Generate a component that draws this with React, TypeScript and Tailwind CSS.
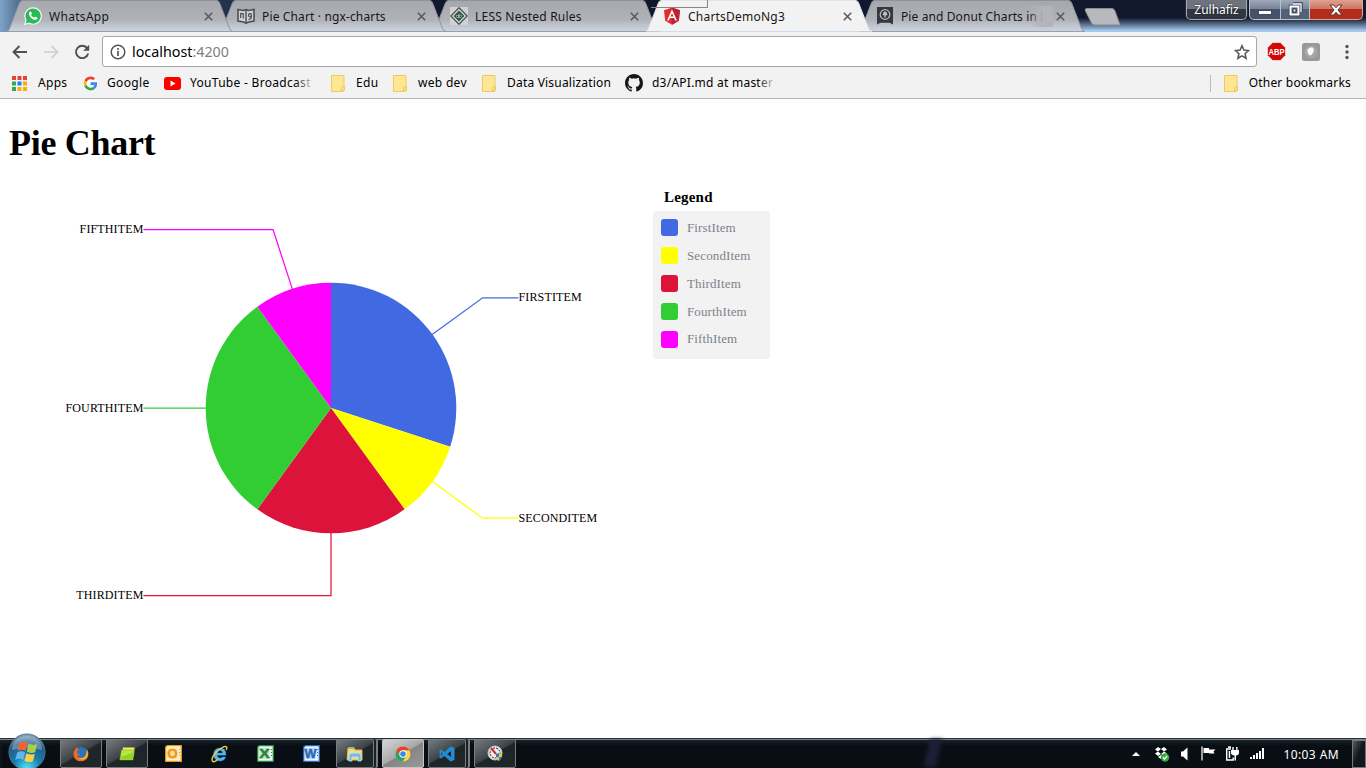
import React from "react";

const UI = "font-['Noto_Sans','Open_Sans',sans-serif]";

function WhatsApp() {
  return (
    <svg width="18" height="18" viewBox="0 0 18 18">
      <path d="M9 .8a8.2 8.2 0 0 0-7 12.3L.8 17.3 5 16.1A8.2 8.2 0 1 0 9 .8z" fill="#29b95b" stroke="#f3f6f4" strokeWidth="1.2" />
      <path d="M5.500 5c.6-.8 1.400-.8 1.700-.1l.6 1.400c.2.500-.2.900-.7 1.400.7 1.400 1.700 2.300 3.100 2.900.6-.7 1-1.100 1.500-.8l1.400.7c.6.400.3 1.400-.4 1.900-1.300 1-3.400.3-5-1C5.800 9.800 4.100 7 5.500 5z" fill="#fff" />
    </svg>
  );
}
function Book() {
  return (
    <svg width="18" height="16" viewBox="0 0 18 16">
      <path d="M1 1.500l5.500 1L9 1.500l2.500 1 5.500-1v11.500l-5.500 1L9 15.200l-2.500-1.200-5.500-1z" fill="#d0d2d6" stroke="#4b4e52" strokeWidth="1.600" />
      <path d="M9 2v12.500" stroke="#4b4e52" strokeWidth="1.400" />
      <path d="M3.700 10V5M6.300 10.500V5.500M3.500 5.300l3 .5" fill="none" stroke="#4b4e52" strokeWidth="1.200" />
      <path d="M14.300 6.500c-.5-1.700-2.800-1-2.800.8s2.300 2 2.800.3zM14.300 5.500v3.500q0 2-2.800 2.500" fill="none" stroke="#4b4e52" strokeWidth="1.200" />
    </svg>
  );
}
function Less() {
  return (
    <svg width="18" height="18" viewBox="0 0 18 18">
      <rect width="18" height="18" fill="#cfd1d4" />
      <path d="M9 .8L17.200 9 9 17.200.8 9z" fill="#d9dcdb" stroke="#46514d" strokeWidth="1.300" />
      <path d="M9 3.500L14.500 9 9 14.500 3.500 9z" fill="#3a5147" />
      <path d="M5.500 8l2 .5L9 6.500l1.500 2 2-.5L11 11H7z" fill="#81b598" />
      <path d="M7 9.500h1M10 9.500h1" stroke="#21352c" />
    </svg>
  );
}
function Angular() {
  return (
    <svg width="18" height="18" viewBox="0 0 18 18">
      <path d="M9 .5l8 2.800-1.200 10.500L9 17.700l-6.800-3.900L1 3.300z" fill="#df2e31" />
      <path d="M9 .5l8 2.800-1.200 10.500L9 17.700z" fill="#bd2430" />
      <path fillRule="evenodd" d="M9 2.400L4 13.500h1.900l1-2.500h4.200l1 2.500H14zM9 6.200l1.400 3.300H7.600z" fill="#fff" />
    </svg>
  );
}
function Ribbon() {
  return (
    <svg width="16" height="18" viewBox="0 0 16 18">
      <path d="M0 0h16v17.500l-3.500-1.800H3.500L0 17.500z" fill="#35383f" />
      <circle cx="8" cy="7.500" r="4.800" fill="none" stroke="#b6b8bd" strokeWidth="1.300" />
      <path d="M8 4.500v6M5.700 7.500h4.600M6 5.800h4" stroke="#c7c9cd" strokeWidth="1.300" />
    </svg>
  );
}

type Tab = { title: string; icon: React.ReactNode; stack: string; active?: boolean; fade?: boolean; gap: string };
const tabs: Tab[] = [
  { title: "WhatsApp", icon: <WhatsApp />, stack: "z-[5] tracking-[.3px]", gap: "gap-[7px]" },
  { title: "Pie Chart · ngx-charts", icon: <Book />, stack: "z-[4] tracking-[.14px]", gap: "gap-[7px]" },
  { title: "LESS Nested Rules", icon: <Less />, stack: "z-[3] tracking-[.22px]", gap: "gap-[7px]" },
  { title: "ChartsDemoNg3", icon: <Angular />, stack: "z-[6] tracking-[.22px]", active: true, gap: "gap-[7px]" },
  { title: "Pie and Donut Charts in D", icon: <Ribbon />, stack: "z-[2] tracking-[.1px]", fade: true, gap: "gap-[7px]" },
];

function TabView({ tab }: { tab: Tab }) {
  return (
    <div className={`relative -mr-[13px] h-8 w-[226px] shrink-0 ${tab.stack}`}>
      <svg className="absolute inset-0" width="226" height="32">
        <defs>
          <linearGradient id="idle" x2="0" y2="1">
            <stop offset="0" stopColor="#a6a8ae" />
            <stop offset=".62" stopColor="#b0b2b8" />
            <stop offset=".85" stopColor="#c3c9d4" />
            <stop offset="1" stopColor="#ccd3df" />
          </linearGradient>
        </defs>
        <path
          d="M0 31.500Q1.500 31 2.500 28.500L12 4Q13 1 15 1H210Q212 1 213 4L222.500 28.500Q223.500 31 226 31.500z"
          fill={tab.active ? "#f2f2f2" : "url(#idle)"}
        />
        <path
          d="M0 31.500Q1.500 31 2.500 28.500L12 4Q13 .5 15 .5H210Q212 .5 213 4L222.500 28.500Q223.500 31 226 31.500"
          fill="none"
          stroke={tab.active ? "#e2e4e8" : "#8d929b"}
        />
        {!tab.active && <path d="M0 31.500H226" stroke="#9a9fa8" />}
      </svg>
      <div className={`relative flex h-8 items-center pl-[17px] pr-[20px] ${tab.gap}`}>
        <span className="flex w-[18px] shrink-0 justify-center">{tab.icon}</span>
        <span className="relative flex-1 whitespace-nowrap pt-px text-[12px] leading-5 text-[#171717]">
          {tab.title}
          {tab.fade && <span className="absolute inset-y-0 -right-1 w-6 bg-linear-to-r from-transparent to-[#b2b4ba] to-60%" />}
        </span>
        <svg width="9" height="9" viewBox="0 0 9 9" className="shrink-0">
          <path d="M.8.8l7.400 7.400M8.200.8L.8 8.200" stroke="#55575b" strokeWidth="1.500" />
        </svg>
      </div>
    </div>
  );
}

function WindowButtons() {
  return (
    <div className="ml-auto flex h-5 pr-[3px]">
      <div className="mr-[2px] flex h-5 w-[61px] items-center justify-center rounded-b-[5px] border border-t-0 border-[#a4a9b2] bg-linear-to-b from-[#6d747f] from-45% to-[#303742] to-50% text-[12px] text-white shadow-[0_0_0_1px_#222a36] [text-shadow:0_0_2px_#111]">
        Zulhafiz
      </div>
      <div className="flex h-5 w-8 items-end justify-center rounded-bl-[5px] border border-t-0 border-[#bcc3cd] bg-linear-to-b from-[#a0a9b7] from-0% via-[#79859a] via-45% to-[#45536a] to-50% pb-[5px]">
        <span className="h-[3px] w-3 bg-white shadow-[0_0_0_1px_#414c5c]" />
      </div>
      <div className="flex h-5 w-[29px] items-center justify-center border-b border-r border-[#bcc3cd] bg-linear-to-b from-[#a0a9b7] from-0% via-[#79859a] via-45% to-[#526278] to-50%">
        <svg width="15" height="15" viewBox="0 0 15 15">
          <path d="M5 2h8v8M2.500 4.500h8v8h-8z" fill="none" stroke="#343e4d" strokeWidth="3.400" />
          <path d="M5 2h8v8" fill="none" stroke="#fff" strokeWidth="1.300" />
          <path d="M2.500 4.500h8v8h-8z" fill="#56657b" stroke="#fff" strokeWidth="2" />
          <path d="M5 7h3v3H5z" fill="#f2f4f7" stroke="#303a48" strokeWidth="1" />
        </svg>
      </div>
      <div className="flex h-5 w-[53px] items-center justify-center rounded-br-[5px] border-b border-r border-[#d6a49a] bg-linear-to-b from-[#e0a293] from-0% via-[#cf7562] via-45% to-[#b42d18] to-50%">
        <svg width="14" height="12" viewBox="0 0 14 12">
          <path d="M1 1h3.500L7 3.700 9.500 1H13L9 6l4 5H9.500L7 8.300 4.500 11H1l4-5z" fill="#fff" stroke="#59312d" strokeWidth="1" />
        </svg>
      </div>
    </div>
  );
}

function Folder() {
  return (
    <svg width="14" height="17" viewBox="0 0 14 17" className="shrink-0">
      <path d="M.5.5h12.500v11.500h.5v2.500q0 2-2 2H.5z" fill="#ffe694" stroke="#edcb5d" />
      <path d="M10.500 16V13q0-1.500 1.500-1.500h1V14q0 2-2.500 2z" fill="#ffe694" stroke="#e9c552" strokeWidth=".8" />
    </svg>
  );
}
function AppsGrid() {
  const c = ["#e94335", "#e94335", "#e94335", "#34a853", "#1a86e8", "#f9ad07", "#34a853", "#f9ad07", "#f9ad07"];
  return (
    <svg width="15" height="15">
      {c.map((f, i) => (
        <rect key={i} x={(i % 3) * 5.5} y={Math.floor(i / 3) * 5.5} width="4" height="4" fill={f} />
      ))}
    </svg>
  );
}
function Google() {
  return (
    <svg width="15" height="15" viewBox="-2 -2 52 52">
      <circle cx="24" cy="24" r="26" fill="#fff" />
      <path fill="#EA4335" d="M24 9.500c3.540 0 6.710 1.220 9.210 3.600l6.850-6.850C35.900 2.380 30.470 0 24 0 14.620 0 6.510 5.380 2.560 13.220l7.980 6.190C12.430 13.720 17.740 9.500 24 9.500z" />
      <path fill="#4285F4" d="M46.980 24.550c0-1.570-.15-3.090-.38-4.550H24v9.020h12.940c-.58 2.960-2.260 5.480-4.780 7.180l7.730 6c4.510-4.180 7.090-10.360 7.090-17.650z" />
      <path fill="#FBBC05" d="M10.530 28.590A14.500 14.500 0 0 1 9.770 24c0-1.600.27-3.140.76-4.590l-7.980-6.190A23.900 23.900 0 0 0 0 24c0 3.880.92 7.540 2.560 10.780z" />
      <path fill="#34A853" d="M24 48c6.480 0 11.930-2.130 15.890-5.810l-7.730-6c-2.150 1.450-4.920 2.300-8.160 2.300-6.260 0-11.570-4.220-13.470-9.910l-7.980 6.190C6.510 42.620 14.620 48 24 48z" />
    </svg>
  );
}
function YouTube() {
  return (
    <svg width="17" height="13" viewBox="0 0 17 13">
      <rect width="17" height="13" rx="3" fill="#f00" />
      <path d="M6.500 3.500v6l5-3z" fill="#fff" />
    </svg>
  );
}
function GitHub() {
  return (
    <svg width="18" height="18" viewBox="0 0 16 16">
      <path d="M8 0C3.580 0 0 3.580 0 8c0 3.540 2.290 6.530 5.470 7.590.4.070.55-.17.55-.38 0-.19-.01-.82-.01-1.490-2.010.37-2.530-.49-2.690-.94-.09-.23-.48-.94-.82-1.130-.28-.15-.68-.52-.01-.53.63-.01 1.080.58 1.230.82.72 1.210 1.870.87 2.330.66.07-.52.28-.87.51-1.070-1.780-.2-3.640-.89-3.640-3.950 0-.87.31-1.590.82-2.150-.08-.2-.36-1.020.08-2.120 0 0 .67-.21 2.200.82a7.600 7.600 0 0 1 4 0c1.530-1.040 2.200-.82 2.200-.82.44 1.100.16 1.920.08 2.120.51.56.82 1.270.82 2.150 0 3.070-1.870 3.750-3.650 3.950.29.25.54.73.54 1.480 0 1.070-.01 1.930-.01 2.200 0 .21.15.46.55.38A8 8 0 0 0 16 8c0-4.420-3.580-8-8-8z" fill="#191717" />
    </svg>
  );
}

const bookmarks = [
  { label: "Apps", icon: <AppsGrid />, box: "w-[71px] tracking-[.3px]", lead: "w-[26px]", fade: false },
  { label: "Google", icon: <Google />, box: "w-[81px] tracking-[.35px]", lead: "w-[24px]", fade: false },
  { label: "YouTube - Broadcast", icon: <YouTube />, box: "w-[167px] tracking-[.3px]", lead: "w-[26px]", fade: true },
  { label: "Edu", icon: <Folder />, box: "w-[62px] tracking-[.3px]", lead: "w-[25px]", fade: false },
  { label: "web dev", icon: <Folder />, box: "w-[89px] tracking-[.3px]", lead: "w-[25px]", fade: false },
  { label: "Data Visualization", icon: <Folder />, box: "w-[143px] tracking-[.2px]", lead: "w-[25px]", fade: false },
  { label: "d3/API.md at master", icon: <GitHub />, box: "w-[150px] tracking-[.24px]", lead: "w-[27px]", fade: true },
];

function Toolbar() {
  return (
    <div className="flex h-[36px] items-start bg-[#f2f2f2] pt-[4px]">
      <div className="flex h-[31px] w-[102px] items-center gap-[15px] pl-[12px]">
        <svg width="16" height="14" viewBox="0 0 16 14"><path d="M7.500 1L1.500 7l6 6M1.500 7h13.500" fill="none" stroke="#505050" strokeWidth="1.900" /></svg>
        <svg width="16" height="14" viewBox="0 0 16 14"><path d="M8.500 1l6 6-6 6M14.500 7H1" fill="none" stroke="#cecece" strokeWidth="1.700" /></svg>
        <svg width="16" height="16" viewBox="0 0 16 16"><path d="M13.300 4.400A6.200 6.200 0 1 0 14.200 9.500" fill="none" stroke="#505050" strokeWidth="1.900" /><path d="M15.200.8v6H9.200z" fill="#505050" /></svg>
      </div>
      <div className="flex h-[31px] w-[1155px] items-center rounded-[3px] border border-[#a6a6a6] bg-white pl-[7px] pr-[6px]">
        <svg width="16" height="16" viewBox="0 0 16 16"><circle cx="8" cy="8" r="6.800" fill="none" stroke="#555" strokeWidth="1.500" /><path d="M8 7v5M8 4v1.700" stroke="#555" strokeWidth="1.700" /></svg>
        <span className="ml-[6px] flex-1 text-[14.300px] leading-6 text-black">localhost<span className="text-[#808080]">:4200</span></span>
        <svg width="16" height="16" viewBox="0 0 16 16"><path d="M8 1.800l1.900 4.300 4.600.5-3.400 3.100 1 4.600L8 11.900l-4.100 2.400 1-4.600L1.500 6.600l4.600-.5z" fill="none" stroke="#5a5a5a" strokeWidth="1.600" /></svg>
      </div>
      <div className="flex h-[31px] flex-1 items-center pl-[10px]">
        <svg width="19" height="19" viewBox="0 0 19 19">
          <path d="M5.700.5h7.600l5.200 5.200v7.600l-5.200 5.200H5.700L.5 13.300V5.700z" fill="#d30808" stroke="#eee" strokeWidth=".7" />
          <text x="9.500" y="12.800" textAnchor="middle" textLength="16" lengthAdjust="spacingAndGlyphs" fontFamily="Liberation Sans" fontSize="9.500" fontWeight="bold" fill="#fff">ABP</text>
        </svg>
        <svg width="18" height="18" viewBox="0 0 18 18" className="ml-[16px]"><rect width="18" height="18" rx="2.500" fill="#999" /><circle cx="9" cy="9" r="6.500" fill="#a6a6a6" /><path d="M5.500 6.500q5-4 6.200-.5c.6 3.500-2.500 6.500-3.500 6.500-1.200 0-3.200-3-2.700-6z" fill="#fff" /></svg>
        <svg width="4" height="16" viewBox="0 0 4 16" className="ml-[25px]"><g fill="#565656"><circle cx="2" cy="2.500" r="1.700" /><circle cx="2" cy="8" r="1.700" /><circle cx="2" cy="13.500" r="1.700" /></g></svg>
      </div>
    </div>
  );
}

const slices = [
  { name: "FirstItem", color: "#4169e1", from: 0, to: 108, swatch: "bg-[#4169e1]" },
  { name: "SecondItem", color: "#ffff00", from: 108, to: 144, swatch: "bg-[#ffff00]" },
  { name: "ThirdItem", color: "#dc143c", from: 144, to: 216, swatch: "bg-[#dc143c]" },
  { name: "FourthItem", color: "#32cd32", from: 216, to: 324, swatch: "bg-[#32cd32]" },
  { name: "FifthItem", color: "#ff00ff", from: 324, to: 360, swatch: "bg-[#ff00ff]" },
];

const CX = 331;
const CY = 228;
function point(deg: number, r: number): [number, number] {
  const a = (deg * Math.PI) / 180;
  return [CX + Math.sin(a) * r, CY - Math.cos(a) * r];
}

function Pie() {
  return (
    <svg width="653" height="440" className="shrink-0">
      {slices.map((s) => {
        const mid = (s.from + s.to) / 2;
        const [x0, y0] = point(s.from, 125.3);
        const [x1, y1] = point(s.to, 125.3);
        const inner = point(mid, 125);
        const outer = point(mid, 187.5);
        const right = mid < 180;
        const lx = right ? CX + 187.5 : CX - 187.5;
        return (
          <g key={s.name}>
            <path d={`M${CX} ${CY}L${x0} ${y0}A125.3 125.3 0 0 1 ${x1} ${y1}z`} fill={s.color} />
            <polyline points={`${inner} ${outer} ${lx},${outer[1]}`} fill="none" stroke={s.color} strokeWidth="1.25" />
            <text x={lx} y={Math.floor(outer[1] + 4)} textAnchor={right ? "start" : "end"} fontFamily="Liberation Serif, serif" fontSize="12" letterSpacing=".14">
              {s.name.toUpperCase()}
            </text>
          </g>
        );
      })}
    </svg>
  );
}

function Page() {
  return (
    <main className="h-[639px] bg-white font-['Liberation_Serif',serif] text-black">
      <h1 className="h-[81px] pl-[9px] pt-[23px] text-[36px] font-bold leading-[42px] tracking-[-.3px]">Pie Chart</h1>
      <div className="flex">
        <Pie />
        <section className="w-[117px] pt-[7px]">
          <h2 className="h-6 pl-[11px] text-[15px] font-bold leading-5 tracking-[.2px]">Legend</h2>
          <ul className="flex h-[148px] flex-col rounded-[3px] bg-[#f2f2f2] pl-2 pt-[3px]">
            {slices.map((s) => (
              <li key={s.name} className="flex h-[27.800px] items-center gap-[9px] text-[13px] tracking-[.13px] text-[#7d828c]">
                <span className={`h-[17px] w-[17px] rounded-[3px] ${s.swatch}`} />
                {s.name}
              </li>
            ))}
          </ul>
        </section>
      </div>
    </main>
  );
}

function Start() {
  return (
    <svg width="38" height="38" viewBox="0 0 38 38" className="block">
      <defs>
        <radialGradient id="orb" cx=".5" cy=".95" r=".95">
          <stop offset="0" stopColor="#4de5ff" />
          <stop offset=".4" stopColor="#167eaf" />
          <stop offset=".75" stopColor="#245a86" />
          <stop offset="1" stopColor="#90abc0" />
        </radialGradient>
      </defs>
      <circle cx="19" cy="19" r="18" fill="url(#orb)" stroke="#53748e" />
      <path d="M4 17a15 14 0 0 1 30 0q-15-4-30 0z" fill="#fff" opacity=".28" />
      <path d="M11.500 10q4-2.500 8 0l-2 8q-4-2.500-8 0z" fill="#f0652d" />
      <path d="M20.700 10.500q4 2.500 8.500.5l-2 8q-4.500 2-8.500-.5z" fill="#a7d04a" />
      <path d="M9.200 19.500q4-2.500 8 0l-2 7.500q-4-2.500-8 0z" fill="#64b5ed" />
      <path d="M18.400 20.200q4 2.500 8.500.5l-2 7.500q-4.500 2-8.500-.5z" fill="#ffce42" />
    </svg>
  );
}
function Firefox() {
  return (
    <svg width="16" height="16" viewBox="0 0 16 16"><circle cx="8" cy="8" r="7" fill="#2c72b8" /><path d="M4 1Q2 3 2 4 0 5 .7 10A7.500 7.500 0 0 0 15.300 9q.8-4-2-6 1 3-.5 6-2 4-6 3-3-1-2.800-3 2 1 3-.5Q3.500 8 4 5q2 0 2-1Q4 3 4 1z" fill="#ee6c21" /><path d="M14 4q2 5-1 8-4 3-8 0 6 1 8-3z" fill="#ffbd37" /></svg>
  );
}
function Notes() {
  return (
    <svg width="16" height="14" viewBox="0 0 16 14"><path d="M4 .5h11.500l-.5 9H2.500z" fill="#f6ee63" /><path d="M2.500 3h12.500l-1 10H.7z" fill="#b9e83c" stroke="#819e22" strokeWidth=".5" /><path d="M2 9.500Q9 8 14.500 5l-.7 7.500H1z" fill="#8fd428" /></svg>
  );
}
function Office({ letter, fill, bg }: { letter: string; fill: string; bg: string }) {
  return (
    <svg width="17" height="17" viewBox="0 0 17 17"><path d="M.7 3Q.7.700 3 .7h13.300v15.600H.7z" fill={bg} stroke={fill} strokeWidth="1.300" /><path d="M2.500 3h9.500v11H2.500z" fill={fill} opacity=".2" /><text x="7.500" y="13" textAnchor="middle" textLength={letter === "W" ? 12 : 10.500} lengthAdjust="spacingAndGlyphs" fontFamily="Liberation Sans" fontSize="13" fontWeight="bold" fill={fill} stroke={fill} strokeWidth=".5">{letter}</text><path d="M14 4.500h1M14 7.500h1M14 10.500h1" stroke={fill} /></svg>
  );
}
function IE() {
  return (
    <svg width="17" height="18" viewBox="0 0 17 18"><path d="M15 10.300H6.300q.2 2.700 2.900 2.700 1.700 0 2.300-1.100h3.200Q13.500 16 9 16 2.700 16 2.700 9.500 2.700 3 9 3q6.300 0 6 7.300zM6.300 7.900h5.300Q11.300 5.500 9 5.500 6.600 5.500 6.300 7.900z" fill="#52b7ee" stroke="#2687c8" strokeWidth=".4" fillRule="evenodd" /><path d="M15.300 5Q17 .5 13 1.700 7.500 4 3.500 9 0 14 1.500 16t5-1.500" fill="none" stroke="#f2c949" strokeWidth="1.400" /></svg>
  );
}
function Explorer() {
  return (
    <svg width="18" height="16" viewBox="0 0 18 16"><path d="M2 2h6l1 2h7v10H1z" fill="#f8dc7c" stroke="#d7b655" /><path d="M3 1h5v2H3z" fill="#83c784" /><path d="M3 15V9q1-2 3-2h6q2 0 3 2v6h-3v-4H6v4z" fill="#73bce8" stroke="#c4e5f5" strokeWidth=".8" /></svg>
  );
}
function Chrome() {
  return (
    <svg width="16" height="16" viewBox="0 0 16 16"><circle cx="8" cy="8" r="7.500" fill="#ffd244" /><path d="M1.500 4.200a7.500 7.500 0 0 1 13 0H8L5 10z" fill="#e64135" /><path d="M1.500 4.200A7.500 7.500 0 0 0 7.800 15.500L11 10H5z" fill="#24a565" /><circle cx="8" cy="8" r="3.700" fill="#fff" /><circle cx="8" cy="8" r="2.800" fill="#3987ee" /></svg>
  );
}
function Code() {
  return (
    <svg width="16" height="16" viewBox="0 0 16 16"><path fillRule="evenodd" d="M11.500.5L15.500 2v12l-4 1.500L5.500 10 2 12.500.5 12V4L2 3.500 5.500 6zM12 5L8 8l4 3zM2 6v4l2-2z" fill="#218bd3" /></svg>
  );
}
function Gauge() {
  return (
    <svg width="17" height="17" viewBox="0 0 17 17"><circle cx="8" cy="8" r="7" fill="#eee" stroke="#c5c5c5" /><circle cx="8" cy="8" r="5" fill="none" stroke="#222" strokeDasharray="2 1" /><path d="M4 3l5 6" stroke="#d52c2c" strokeWidth="2" /><path d="M9 9l3-1 3 1v3q-1 3-3 4-2-1-3-4z" fill="#287cc9" /><path d="M12 8l3 1v3h-3zM9 12h3v4q-2-1-3-4z" fill="#f5c636" /></svg>
  );
}

const glass = "border border-[#777c80] bg-[linear-gradient(150deg,#777b7e_0%,#3c4246_48%,#1e2528_52%,#20272a_100%)]";
const apps = [
  { icon: <Firefox />, box: `w-[42px] mr-[4px] ${glass}` },
  { icon: <Notes />, box: `w-[42px] mr-[4px] ${glass}` },
  { icon: <Office letter="O" fill="#e99b18" bg="#fff2ce" />, box: "w-[42px] mr-[4px]" },
  { icon: <IE />, box: "w-[42px] mr-[4px]" },
  { icon: <Office letter="X" fill="#268742" bg="#edf8e9" />, box: "w-[42px] mr-[4px]" },
  { icon: <Office letter="W" fill="#2869b9" bg="#edf4ff" />, box: "w-[42px] mr-[4px]" },
  { icon: <Explorer />, box: `w-[38px] mr-[8px] shadow-[2px_0_0_#192023,4px_0_0_#777c80] ${glass}` },
  { icon: <Chrome />, box: "w-[42px] mr-[4px] border border-[#c5c5c5] bg-[linear-gradient(150deg,#d5d5d5_0%,#aaaaaa_48%,#858585_52%,#999999_100%)]" },
  { icon: <Code />, box: `w-[38px] mr-[8px] shadow-[2px_0_0_#192023,4px_0_0_#777c80] ${glass}` },
  { icon: <Gauge />, box: `w-[42px] ${glass}` },
];

function Tray() {
  return (
    <div className="ml-auto flex h-[29px] items-center">
      <svg width="8" height="5" className="mr-[14px]"><path d="M0 5l4-4 4 4z" fill="#fff" /></svg>
      <svg width="16" height="16" viewBox="0 0 16 16" className="mr-[11px]"><path d="M4 1l3 2-3 2.500L1 3.500zM10 1l3 2.500-3 2L7 3zM4 5.500L7 8l-3 2-3-2.500zM10 5.500l3 2L10 10 7 8zM4 11l3-2 3 2-3 2z" fill="#fff" /><circle cx="11" cy="11.500" r="4.200" fill="#35af42" /><path d="M9 11.500l1.500 1.500 2.700-3" fill="none" stroke="#fff" strokeWidth="1.300" /></svg>
      <svg width="8" height="14" viewBox="0 0 8 14" className="mr-[12px]"><path d="M0 4.500h2L6.500.5v13L2 9.500H0z" fill="#fff" /></svg>
      <svg width="15" height="15" viewBox="0 0 15 15" className="mr-[9px]"><path d="M1 .5V14.500" stroke="#fff" strokeWidth="1.200" /><path d="M2.500 2H8v1.500h6.500L12.500 5.500l1 2H8V7H2.500z" fill="#fff" /></svg>
      <svg width="14" height="15" viewBox="0 0 14 15" className="mr-[11px]">
        <path d="M6 3H1.700v11h6.500v-2.500" fill="none" stroke="#fff" strokeWidth="1.400" />
        <path d="M3 1.200h3" stroke="#fff" strokeWidth="1.600" />
        <path d="M3.700 5h1.500v7H3.700z" fill="#fff" />
        <path d="M6 4h8v2.500q0 3-3 3V14.500H9.500V9.500Q6 9.500 6 6.500z" fill="#fff" />
        <path d="M8 1v3.500M11.800 1v3.500" stroke="#fff" strokeWidth="1.400" />
      </svg>
      <svg width="15" height="13" className="mr-[18px]"><g fill="#fff"><path d="M0 10h2v2H0zM3 8h2v4H3zM6 6h2v6H6zM9 4h2v8H9zM12 1h2v11h-2z" /></g></svg>
      <span className="mr-[13px] whitespace-nowrap pt-[2px] text-[12px] leading-5 tracking-[.4px] text-white">10:03 AM</span>
      <span className="h-[28px] w-[14px] border border-[#71777a] bg-linear-to-br from-[#555b60] to-[#11171a] to-50%" />
    </div>
  );
}

export default function App() {
  return (
    <div className={`h-[768px] w-[1366px] overflow-hidden ${UI}`}>
      <header className="flex h-8 bg-linear-to-b from-[#11182d] from-55% to-[#a4c8ec] to-95%">
        <div className="flex w-[1084px] bg-linear-to-r from-[#7fa3c8] from-0% via-[#4a688b] via-2% to-transparent to-30% pl-[7px]">
          {tabs.map((tab) => <TabView key={tab.title} tab={tab} />)}
        </div>
        <svg width="36" height="31" className="shrink-0"><path d="M2.500 8.500H28Q30 8.500 31 11l5 14H11Q8 25 7 22L1.500 11Q.5 8.500 2.500 8.500z" fill="#b7b9bd" stroke="#898e97" /></svg>
        <WindowButtons />
      </header>
      <div className="absolute left-[651px] top-0 z-10 h-2 w-[57px] border-b border-r border-[#858585]" />
      <Toolbar />
      <nav className="flex h-[31px] items-center border-b border-[#b3b3b3] bg-[#f2f2f2] pl-[12px] pr-[15px] text-[12px] text-black">
        {bookmarks.map((b) => (
          <div key={b.label} className={`flex items-center ${b.box}`}>
            <span className={`shrink-0 ${b.lead}`}>{b.icon}</span>
            <span className="relative whitespace-nowrap">
              {b.label}
              {b.fade && <span className="absolute inset-y-0 -right-1 w-5 bg-linear-to-r from-transparent to-[#f2f2f2]" />}
            </span>
          </div>
        ))}
        <span className="ml-auto mr-[13px] h-[17px] w-px bg-[#bababa]" />
        <Folder />
        <span className="ml-[11px] whitespace-nowrap tracking-[.2px]">Other bookmarks</span>
      </nav>
      <Page />
      <footer className="relative flex h-[30px] border-t border-[#25303a] bg-[#080e13] shadow-[inset_0_1px_0_#7a858d,inset_0_4px_4px_#17242b]">
        <div className="-mt-[6px] w-[60px] pl-[8px]"><Start /></div>
        {apps.map((app, i) => (
          <div key={i} className={`flex h-[29px] items-center justify-center rounded-[2px] ${app.box}`}>{app.icon}</div>
        ))}
        <span className="ml-[411px] h-[28px] w-[12px] -skew-x-[12deg] bg-[#1b2036] blur-[2px]" />
        <Tray />
      </footer>
    </div>
  );
}
